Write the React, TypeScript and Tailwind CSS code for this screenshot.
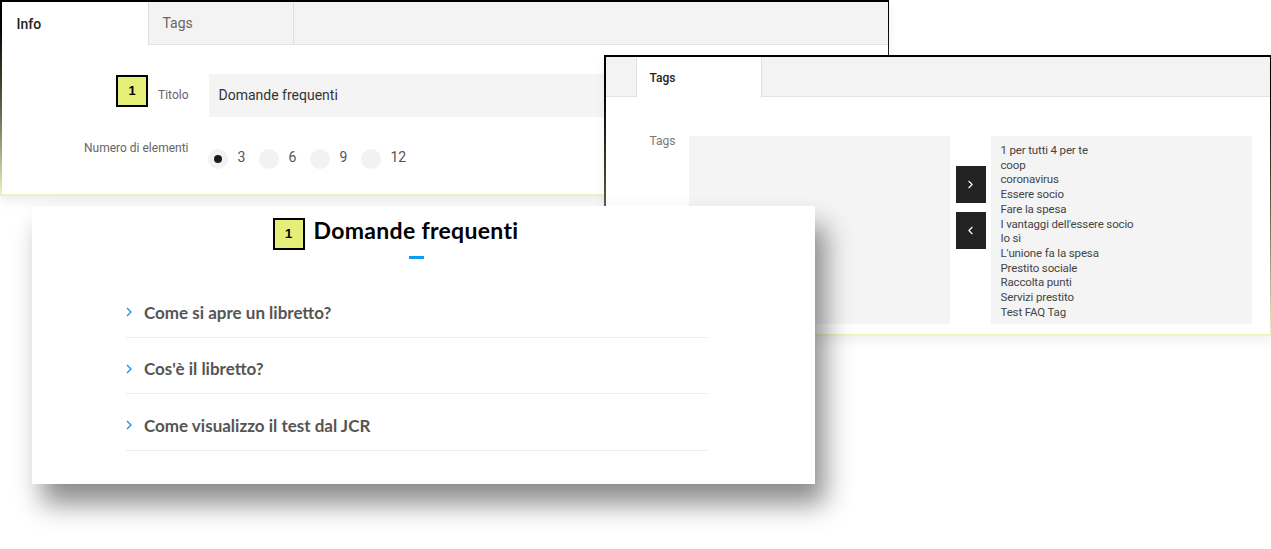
import { ChevronLeft, ChevronRight } from "lucide-react";

const tags = [
  "1 per tutti 4 per te",
  "coop",
  "coronavirus",
  "Essere socio",
  "Fare la spesa",
  "I vantaggi dell'essere socio",
  "Io sì",
  "L'unione fa la spesa",
  "Prestito sociale",
  "Raccolta punti",
  "Servizi prestito",
  "Test FAQ Tag",
];

const faqs = ["Come si apre un libretto?", "Cos'è il libretto?", "Come visualizzo il test dal JCR"];

const Badge = ({ className = "" }: { className?: string }) => (
  <div
    className={`w-[32px] h-[32px] border-2 border-black bg-[#e6ee7a] flex items-center justify-center text-[13px] font-bold text-black font-['Liberation_Sans',sans-serif] ${className}`}
  >
    1
  </div>
);

const InfoWindow = () => (
  <div className="absolute left-0 top-0 w-[889px] h-[196px] pt-[2px] px-[1.5px] pb-[2px] bg-linear-to-b from-black via-[#55553f] to-[#eef6c0] shadow-[0_6px_10px_rgba(0,0,0,0.07)]">
    <div className="h-full bg-white flex flex-col">
      <div className="flex h-[43px] bg-[#f3f3f3] border-b border-[#e2e2e2]">
        <div className="w-[146px] h-[44px] bg-white pl-[15px] flex items-center text-[14px] font-medium text-[#222]">Info</div>
        <div className="w-[146px] border-r border-l border-[#dedede] pl-[14px] flex items-center text-[14px] text-[#666]">Tags</div>
      </div>
      <div className="flex mt-[29px] pr-[20px]">
        <div className="w-[187px] flex justify-end items-start gap-[10px]">
          <Badge className="mt-[1px]" />
          <span className="text-[12px] text-[#666] mt-[12px]">Titolo</span>
        </div>
        <div className="ml-[20px] flex-1 h-[43px] bg-[#f4f4f4] pl-[10px] flex items-center text-[14px] text-[#333]">
          Domande frequenti
        </div>
      </div>
      <div className="flex mt-[23px]">
        <div className="w-[187px] text-right text-[12px] text-[#666] leading-[16px]">Numero di elementi</div>
        <div className="ml-[19px] flex items-center mt-[9px]">
          {["3", "6", "9", "12"].map((n, i) => (
            <div key={n} className="w-[51px] flex items-center gap-[10px]">
              <div className="w-[20px] h-[20px] rounded-full bg-[#f2f2f2] flex items-center justify-center">
                {i === 0 && <div className="w-[8px] h-[8px] rounded-full bg-[#1a1a1a]" />}
              </div>
              <span className="text-[14px] text-[#555] -mt-[4px]">{n}</span>
            </div>
          ))}
        </div>
      </div>
    </div>
  </div>
);

const TagsWindow = () => (
  <div className="absolute left-[604px] top-[55px] w-[667px] h-[281px] pt-[2px] px-[1.5px] pb-[2px] bg-linear-to-b from-black via-[#55553f] to-[#eef6c0] shadow-[0_6px_10px_rgba(0,0,0,0.06)]">
    <div className="h-full bg-white flex flex-col">
      <div className="flex h-[40px] bg-[#f3f3f3] border-b border-[#e2e2e2]">
        <div className="w-[31px] border-r border-[#e0e0e0]" />
        <div className="w-[125px] h-[41px] bg-white border-r border-[#e0e0e0] pl-[13px] flex items-center text-[12px] font-medium text-[#222]">Tags</div>
      </div>
      <div className="flex mt-[39px] pl-[44px]">
        <div className="w-[39px] text-[12px] text-[#777] -mt-[4px]">Tags</div>
        <div className="w-[261px] h-[188px] bg-[#f4f4f4]" />
        <div className="ml-[6px] w-[30px] flex flex-col gap-[9px] pt-[30px]">
          <div className="h-[37px] bg-[#232323] flex items-center justify-center text-white">
            <ChevronRight size={13} strokeWidth={2} />
          </div>
          <div className="h-[37px] bg-[#232323] flex items-center justify-center text-white">
            <ChevronLeft size={13} strokeWidth={2} />
          </div>
        </div>
        <div className="ml-[5px] w-[261px] h-[188px] bg-[#f4f4f4] pl-[10px] pt-[7px] text-[11.5px] tracking-[-0.15px] leading-[14.7px] text-[#444]">
          {tags.map((t) => (
            <div key={t}>{t}</div>
          ))}
        </div>
      </div>
    </div>
  </div>
);

const FaqWindow = () => (
  <div className="absolute left-[32px] top-[206px] w-[783px] h-[278px] bg-white shadow-[10px_20px_25px_rgba(0,0,0,0.45)] font-['Lato',sans-serif]">
    <div className="flex flex-col items-center pt-[10px] pr-[15px]">
      <div className="relative">
        <Badge className="absolute -left-[41px] top-[2px]" />
        <h2 className="text-[23px] tracking-[0.3px] leading-[29px] font-bold text-black">Domande frequenti</h2>
      </div>
      <div className="mt-[11px] w-[15px] h-[3px] bg-[#0d9cf2]" />
    </div>
    <div className="ml-[94px] w-[581px] mt-[22px]">
      {faqs.map((q) => (
        <div key={q} className="h-[56.5px] border-b border-[#ececec] flex items-center gap-[12px] pt-[7px]">
          <svg width="6" height="10" viewBox="0 0 6 10" className="shrink-0">
            <polyline points="1,1 5,5 1,9" fill="none" stroke="#1e90e8" strokeWidth="1.3" />
          </svg>
          <span className="text-[17px] font-bold text-[#555]">{q}</span>
        </div>
      ))}
    </div>
  </div>
);

export default function App() {
  return (
    <div className="relative w-[1271px] h-[549px] bg-white overflow-hidden font-['Roboto',sans-serif]">
      <InfoWindow />
      <TagsWindow />
      <FaqWindow />
    </div>
  );
}
